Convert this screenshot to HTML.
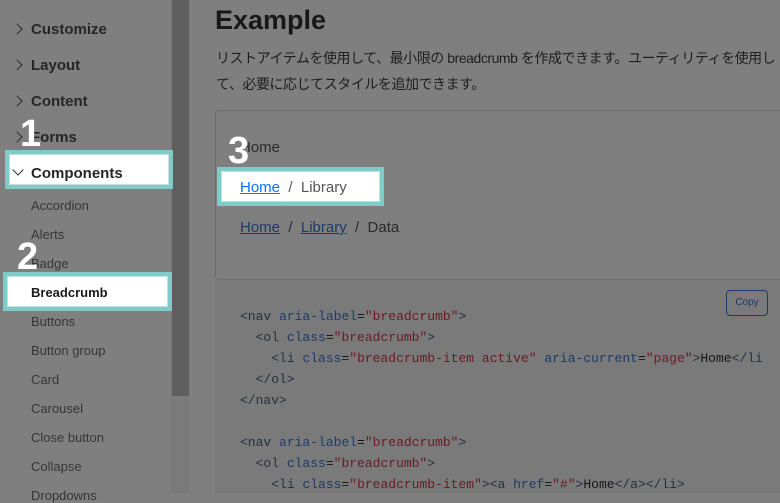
<!DOCTYPE html>
<html><head><meta charset="utf-8"><style>
*{margin:0;padding:0;box-sizing:border-box}
body{width:780px;height:493px;overflow:hidden;background:#7f7f7f;font-family:"Liberation Sans","Noto Sans CJK JP",sans-serif;position:relative}
.a{position:absolute;white-space:nowrap}
.m{font-size:15px;color:#262626;font-weight:600}
.s{font-size:13px;color:#363636}
.chev{position:absolute;width:8px;height:8px;border-right:1.6px solid #2c2c2c;border-bottom:1.6px solid #2c2c2c}
.box{position:absolute;background:#fff;border:4px solid #7ecbc8;outline:1px solid #bfe3e1;outline-offset:-5px}
.num{position:absolute;color:#fff;font-weight:bold;font-size:38px;font-family:"Liberation Sans",sans-serif}
pre{font-family:"Liberation Mono","DejaVu Sans Mono",monospace;font-size:13px;line-height:21px;color:#151515;white-space:pre}
.t{color:#24303f}.n{color:#1d3a68}.v{color:#6a1a26}
a{color:#1d3a68;text-decoration:underline}
</style></head><body>
<div class="a" style="left:170px;top:0;width:20px;height:493px;background:#7a7a7a"></div>
<div class="a" style="left:172px;top:0;width:17px;height:396px;background:#5e5e5e"></div>

<div class="chev" style="left:13px;top:25px;transform:rotate(-45deg)"></div>
<div class="a m" style="left:31px;top:21px">Customize</div>
<div class="chev" style="left:13px;top:61px;transform:rotate(-45deg)"></div>
<div class="a m" style="left:31px;top:57px">Layout</div>
<div class="chev" style="left:13px;top:97px;transform:rotate(-45deg)"></div>
<div class="a m" style="left:31px;top:93px">Content</div>
<div class="chev" style="left:13px;top:133px;transform:rotate(-45deg)"></div>
<div class="a m" style="left:31px;top:129px">Forms</div>

<div class="box" style="left:5px;top:150px;width:168px;height:39px"></div>
<div class="chev" style="left:14px;top:166px;transform:rotate(45deg)"></div>
<div class="a m" style="left:31px;top:165px">Components</div>
<div class="box" style="left:3px;top:272px;width:169px;height:39px"></div>

<div class="a s" style="left:31px;top:198px">Accordion</div>
<div class="a s" style="left:31px;top:227px">Alerts</div>
<div class="a s" style="left:31px;top:256px">Badge</div>
<div class="a s" style="left:31px;top:285px;color:#1a1a1a;font-weight:600">Breadcrumb</div>
<div class="a s" style="left:31px;top:314px">Buttons</div>
<div class="a s" style="left:31px;top:343px">Button group</div>
<div class="a s" style="left:31px;top:372px">Card</div>
<div class="a s" style="left:31px;top:401px">Carousel</div>
<div class="a s" style="left:31px;top:430px">Close button</div>
<div class="a s" style="left:31px;top:459px">Collapse</div>
<div class="a s" style="left:31px;top:488px">Dropdowns</div>
<div class="num" style="left:20px;top:113px">1</div>
<div class="num" style="left:17px;top:236px">2</div>

<div class="a" style="left:215px;top:5px;font-size:27px;font-weight:600;color:#181818">Example</div>
<div class="a" style="left:216px;top:45px;font-size:14px;line-height:26px;color:#1e1e1e;white-space:normal;width:562px;letter-spacing:-0.45px">リストアイテムを使用して、最小限の breadcrumb を作成できます。ユーティリティを使用して、必要に応じてスタイルを追加できます。</div>

<div class="a" style="left:215px;top:110px;width:570px;height:170px;border:1px solid #6d6d6d;border-radius:4px"></div>
<div class="a" style="left:240px;top:139px;font-size:15px;color:#2a2a2a">Home</div>
<div class="box" style="left:217px;top:167px;width:167px;height:39px"></div>
<div class="a" style="left:240px;top:179px;font-size:15px;color:#555"><span style="color:#0d6efd;text-decoration:underline">Home</span>&nbsp; /&nbsp; Library</div>
<div class="a" style="left:240px;top:219px;font-size:15px;color:#2a2a2a"><a>Home</a>&nbsp; /&nbsp; <a>Library</a>&nbsp; /&nbsp; Data</div>
<div class="num" style="left:228px;top:130px">3</div>

<div class="a" style="left:215px;top:280px;width:565px;height:213px;background:#7a7a7a;overflow:hidden">
<pre style="position:absolute;left:25px;top:26px"><span class="t">&lt;nav</span> <span class="n">aria-label</span>=<span class="v">"breadcrumb"</span><span class="t">&gt;</span>
  <span class="t">&lt;ol</span> <span class="n">class</span>=<span class="v">"breadcrumb"</span><span class="t">&gt;</span>
    <span class="t">&lt;li</span> <span class="n">class</span>=<span class="v">"breadcrumb-item active"</span> <span class="n">aria-current</span>=<span class="v">"page"</span><span class="t">&gt;</span>Home<span class="t">&lt;/li</span>
  <span class="t">&lt;/ol&gt;</span>
<span class="t">&lt;/nav&gt;</span>

<span class="t">&lt;nav</span> <span class="n">aria-label</span>=<span class="v">"breadcrumb"</span><span class="t">&gt;</span>
  <span class="t">&lt;ol</span> <span class="n">class</span>=<span class="v">"breadcrumb"</span><span class="t">&gt;</span>
    <span class="t">&lt;li</span> <span class="n">class</span>=<span class="v">"breadcrumb-item"</span><span class="t">&gt;&lt;a</span> <span class="n">href</span>=<span class="v">"#"</span><span class="t">&gt;</span>Home<span class="t">&lt;/a&gt;&lt;/li&gt;</span></pre>
<div style="position:absolute;left:511px;top:10px;width:42px;height:26px;border:1px solid #1d3a68;border-radius:4px;font-size:10px;color:#1d3a68;text-align:center;line-height:24px">Copy</div>
</div>
</body></html>
